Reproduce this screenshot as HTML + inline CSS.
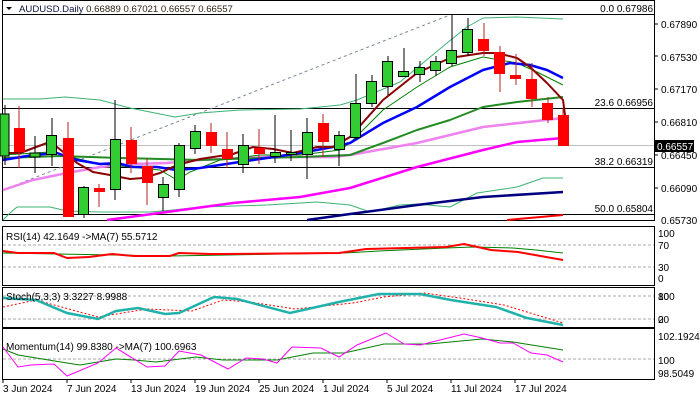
<!DOCTYPE html>
<html><head><meta charset="utf-8"><style>
html,body{margin:0;padding:0;background:#fff;width:700px;height:400px;overflow:hidden}
svg{display:block}
text{font-family:"Liberation Sans",sans-serif;font-size:10px;fill:#000}
</style></head><body>
<svg width="700" height="400" viewBox="0 0 700 400" xmlns="http://www.w3.org/2000/svg">
<rect width="700" height="400" fill="#fff"/>
<g fill="none" stroke="#000" stroke-width="1">
<rect x="2.5" y="0.5" width="652" height="220"/>
<rect x="2.5" y="226.5" width="652" height="59"/>
<rect x="2.5" y="287.5" width="652" height="40"/>
<rect x="2.5" y="328.5" width="652" height="51"/>
</g>
<g stroke="#000" stroke-width="1">
<line x1="3" y1="14.5" x2="654" y2="14.5"/>
<line x1="3" y1="108.5" x2="654" y2="108.5"/>
<line x1="3" y1="167.5" x2="654" y2="167.5"/>
<line x1="3" y1="214.5" x2="654" y2="214.5"/>
</g>
<line x1="3" y1="145.5" x2="654" y2="145.5" stroke="#c0c0c0"/>
<line x1="3" y1="190" x2="450" y2="15" stroke="#778899" stroke-dasharray="3,3"/>
<g fill="none" stroke-linejoin="round">
<polyline stroke="#3cb371" stroke-width="1" points="3,99 40,99 65,97 100,100 130,108 175,117 200,113 240,110 300,109 340,105 357,100 400,82 447,43 467,27 483,18 517,17 563,19"/>
<polyline stroke="#3cb371" stroke-width="1" points="3,220 10,213 17,207 50,207 67,211 100,212 150,212 173,210 200,207 267,205 317,202 350,205 370,212 400,205 417,204 450,207 477,193 517,187 543,178 563,178"/>
<polyline stroke="#ff0000" stroke-width="2" points="507,220 563,215"/>
<polyline stroke="#000080" stroke-width="2.5" points="307,220 350,214 417,205 483,197 563,192"/>
<polyline stroke="#ff00ff" stroke-width="2.5" points="107,220 167,212 233,203 300,197 350,188 417,167 483,150 517,142 563,138"/>
<polyline stroke="#ee82ee" stroke-width="2.5" points="3,190 33,180 67,173 100,167 133,164 167,163 200,160 267,157 333,157 350,155 417,143 483,127 563,118"/>
<polyline stroke="#228b22" stroke-width="2" points="3,158 60,156 120,158 200,160 260,158 300,157 350,155 383,143 417,130 450,120 483,107 517,102 563,97"/>
<polyline stroke="#008000" stroke-width="1" points="3,155 50,152 75,158 100,164 130,167 160,170 177,180 190,172 220,160 260,155 300,155 340,150 350,143 383,110 417,87 450,67 483,57 517,63 537,72 563,85"/>
<polyline stroke="#0000ff" stroke-width="2.5" points="3,160 33,155 57,153 77,160 100,164 117,163 133,167 157,167 177,170 200,168 233,163 267,158 300,153 333,147 350,143 383,123 417,107 450,87 483,70 510,63 530,65 547,70 563,78"/>
<polyline stroke="#8b0000" stroke-width="2" points="3,153 20,153 47,143 57,147 77,163 93,172 110,175 130,179 143,178 160,173 177,165 200,159 233,154 253,147 273,149 293,153 317,147 333,147 350,137 383,100 417,73 450,58 483,53 497,53 517,58 530,67 547,83 563,100 565,115"/>
</g>
<g stroke-width="1">
<line x1="5" y1="105" x2="5" y2="165" stroke="#000"/><rect x="0" y="114" width="9" height="42" fill="#32cd32" stroke="#000"/>
<line x1="19" y1="106" x2="19" y2="168" stroke="#b22222"/><rect x="14" y="128" width="11" height="24" fill="#f00"/>
<line x1="35" y1="136" x2="35" y2="173" stroke="#000"/><rect x="30" y="153" width="10" height="4" fill="#32cd32" stroke="#000"/>
<line x1="52" y1="118" x2="52" y2="166" stroke="#000"/><rect x="46.5" y="135.5" width="10" height="19" fill="#32cd32" stroke="#000"/>
<line x1="68" y1="122" x2="68" y2="217" stroke="#b22222"/><rect x="63" y="138" width="11" height="79" fill="#f00"/>
<line x1="84" y1="186" x2="84" y2="218" stroke="#000"/><rect x="78.5" y="187.5" width="10" height="27" fill="#32cd32" stroke="#000"/>
<line x1="99" y1="184" x2="99" y2="207" stroke="#b22222"/><rect x="94" y="188" width="11" height="4" fill="#f00"/>
<line x1="115" y1="100" x2="115" y2="200" stroke="#000"/><rect x="110.5" y="139.5" width="10" height="50" fill="#32cd32" stroke="#000"/>
<line x1="131" y1="127" x2="131" y2="173" stroke="#b22222"/><rect x="126" y="140" width="11" height="24" fill="#f00"/>
<line x1="147" y1="158" x2="147" y2="205" stroke="#b22222"/><rect x="142" y="166" width="11" height="17" fill="#f00"/>
<line x1="163" y1="177" x2="163" y2="211" stroke="#000"/><rect x="158.5" y="184.5" width="10" height="13" fill="#32cd32" stroke="#000"/>
<line x1="179" y1="143" x2="179" y2="197" stroke="#000"/><rect x="174.5" y="145.5" width="10" height="44" fill="#32cd32" stroke="#000"/>
<line x1="195" y1="125" x2="195" y2="154" stroke="#000"/><rect x="190.5" y="131.5" width="10" height="17" fill="#32cd32" stroke="#000"/>
<line x1="211" y1="123" x2="211" y2="153" stroke="#b22222"/><rect x="206" y="132" width="11" height="14" fill="#f00"/>
<line x1="227" y1="132" x2="227" y2="168" stroke="#b22222"/><rect x="222" y="149" width="11" height="10" fill="#f00"/>
<line x1="243" y1="134" x2="243" y2="173" stroke="#000"/><rect x="238.5" y="145.5" width="10" height="19" fill="#32cd32" stroke="#000"/>
<line x1="259" y1="129" x2="259" y2="164" stroke="#b22222"/><rect x="254" y="148" width="11" height="6" fill="#f00"/>
<line x1="275" y1="115" x2="275" y2="163" stroke="#000"/><rect x="270.5" y="152.5" width="10" height="4" fill="#32cd32" stroke="#000"/>
<line x1="291" y1="130" x2="291" y2="161" stroke="#000"/><rect x="286.5" y="152.5" width="10" height="2" fill="#32cd32" stroke="#000"/>
<line x1="307" y1="118" x2="307" y2="179" stroke="#000"/><rect x="302.5" y="132.5" width="10" height="22" fill="#32cd32" stroke="#000"/>
<line x1="323" y1="114" x2="323" y2="157" stroke="#b22222"/><rect x="318" y="123" width="11" height="19" fill="#f00"/>
<line x1="339" y1="131" x2="339" y2="166" stroke="#000"/><rect x="334.5" y="135.5" width="10" height="14" fill="#32cd32" stroke="#000"/>
<line x1="356" y1="74" x2="356" y2="140" stroke="#000"/><rect x="350.5" y="103.5" width="10" height="34" fill="#32cd32" stroke="#000"/>
<line x1="372" y1="75" x2="372" y2="107" stroke="#000"/><rect x="366.5" y="81.5" width="10" height="22" fill="#32cd32" stroke="#000"/>
<line x1="388" y1="56" x2="388" y2="95" stroke="#000"/><rect x="382.5" y="61.5" width="10" height="25" fill="#32cd32" stroke="#000"/>
<line x1="404" y1="48" x2="404" y2="77" stroke="#000"/><rect x="398.5" y="71.5" width="10" height="5" fill="#32cd32" stroke="#000"/>
<line x1="420" y1="61" x2="420" y2="82" stroke="#000"/><rect x="414.5" y="67.5" width="10" height="7" fill="#32cd32" stroke="#000"/>
<line x1="436" y1="56" x2="436" y2="76" stroke="#000"/><rect x="430.5" y="61.5" width="10" height="9" fill="#32cd32" stroke="#000"/>
<line x1="452" y1="15" x2="452" y2="66" stroke="#000"/><rect x="446.5" y="50.5" width="10" height="13" fill="#32cd32" stroke="#000"/>
<line x1="468" y1="18" x2="468" y2="56" stroke="#000"/><rect x="462.5" y="29.5" width="10" height="23" fill="#32cd32" stroke="#000"/>
<line x1="484" y1="23" x2="484" y2="56" stroke="#b22222"/><rect x="478" y="39" width="11" height="12" fill="#f00"/>
<line x1="500" y1="46" x2="500" y2="92" stroke="#b22222"/><rect x="494" y="52" width="11" height="22" fill="#f00"/>
<line x1="516" y1="54" x2="516" y2="85" stroke="#b22222"/><rect x="510" y="75" width="11" height="4" fill="#f00"/>
<line x1="532" y1="63" x2="532" y2="107" stroke="#b22222"/><rect x="526" y="79" width="11" height="20" fill="#f00"/>
<line x1="548" y1="97" x2="548" y2="123" stroke="#b22222"/><rect x="542" y="103" width="11" height="17" fill="#f00"/>
<line x1="563" y1="108" x2="563" y2="146" stroke="#b22222"/><rect x="558" y="115" width="11" height="31" fill="#f00"/>
</g>
<path d="M6 7 L12 7 L9 10 Z" fill="#000"/>
<text x="19" y="12" style="font-size:9.6px;fill:#101040">AUDUSD.Daily  <tspan style="fill:#302010">0.66889 0.67021 0.66557 0.66557</tspan></text>
<g text-anchor="end">
<text x="653" y="12">0.0 0.67986</text>
<text x="653" y="106">23.6 0.66956</text>
<text x="653" y="165">38.2 0.66319</text>
<text x="653" y="212">50.0 0.65804</text>
</g>
<g stroke="#000"><line x1="655" y1="24" x2="658" y2="24"/><line x1="655" y1="56" x2="658" y2="56"/><line x1="655" y1="89" x2="658" y2="89"/><line x1="655" y1="122" x2="658" y2="122"/><line x1="655" y1="155" x2="658" y2="155"/><line x1="655" y1="188" x2="658" y2="188"/></g>
<text x="661" y="28">0.67890</text>
<text x="661" y="61">0.67530</text>
<text x="661" y="93">0.67170</text>
<text x="661" y="126">0.66810</text>
<text x="661" y="159">0.66450</text>
<text x="661" y="192">0.66090</text>
<text x="661" y="224">0.65730</text>
<rect x="655" y="140" width="39" height="12" fill="#000"/>
<text x="657" y="150" style="fill:#fff">0.66557</text>
<g stroke="#aaa" stroke-dasharray="3,2"><line x1="3" y1="245" x2="654" y2="245"/><line x1="3" y1="267" x2="654" y2="267"/></g>
<polyline fill="none" stroke="#008000" stroke-width="1" points="3,253 58,254 170,256 344,253 379,251 446,248 473,247 513,248 536,250 563,253"/>
<polyline fill="none" stroke="#f00" stroke-width="2" points="3,251 18,253 54,253 67,258 89,257 112,254 134,256 170,256 179,253 210,254 223,254 339,253 366,249 446,247 464,244 491,250 518,252 563,260"/>
<text x="6" y="240">RSI(14) 42.1649  -&gt;MA(7) 55.5712</text>
<text x="658" y="237">100</text><text x="658" y="249">70</text><text x="658" y="271">30</text><text x="658" y="282">0</text>
<g stroke="#aaa" stroke-dasharray="3,2"><line x1="3" y1="296" x2="654" y2="296"/><line x1="3" y1="319" x2="654" y2="319"/></g>
<polyline fill="none" stroke="#f00" stroke-width="1" stroke-dasharray="2,2" points="3,307 36,300 98,317 147,309 192,311 223,300 250,302 295,309 353,303 384,297 424,293 460,298 504,305 563,323"/>
<polyline fill="none" stroke="#20b2aa" stroke-width="2.5" points="3,298 36,300 67,313 98,319 116,311 138,308 165,314 179,313 214,297 237,299 290,313 339,302 379,294 420,294 451,300 496,307 527,318 563,325"/>
<text x="6" y="300">Stoch(5,3,3) 3.3227 8.9988</text>
<text x="658" y="300">100</text><text x="658" y="300">80</text><text x="658" y="323">20</text><text x="658" y="323">0</text>
<line x1="3" y1="359" x2="654" y2="359" stroke="#aaa" stroke-dasharray="3,2"/>
<polyline fill="none" stroke="#008000" stroke-width="1" points="3,349 18,355 67,363 80,365 116,359 134,360 156,362 196,357 223,360 277,360 313,353 344,353 384,344 429,344 482,339 513,342 563,350"/>
<polyline fill="none" stroke="#ff00ff" stroke-width="1" points="3,347 18,367 31,365 54,364 67,376 98,363 116,348 147,367 165,366 179,351 201,355 228,369 246,358 263,359 277,363 292,347 321,348 339,357 357,345 386,333 404,344 420,345 464,334 482,338 500,343 513,343 531,353 547,355 563,362"/>
<text x="6" y="350">Momentum(14) 99.8380  -&gt;MA(7) 100.6963</text>
<text x="658" y="340">102.1924</text><text x="658" y="364">100</text><text x="658" y="377">98.5049</text>
<g stroke="#000"><line x1="3" y1="380" x2="3" y2="383"/><line x1="67" y1="380" x2="67" y2="383"/><line x1="131" y1="380" x2="131" y2="383"/><line x1="195" y1="380" x2="195" y2="383"/><line x1="259" y1="380" x2="259" y2="383"/><line x1="323" y1="380" x2="323" y2="383"/><line x1="387" y1="380" x2="387" y2="383"/><line x1="451" y1="380" x2="451" y2="383"/><line x1="515" y1="380" x2="515" y2="383"/></g>
<text x="3" y="392">3 Jun 2024</text>
<text x="67" y="392">7 Jun 2024</text>
<text x="131" y="392">13 Jun 2024</text>
<text x="195" y="392">19 Jun 2024</text>
<text x="259" y="392">25 Jun 2024</text>
<text x="323" y="392">1 Jul 2024</text>
<text x="387" y="392">5 Jul 2024</text>
<text x="451" y="392">11 Jul 2024</text>
<text x="515" y="392">17 Jul 2024</text>
</svg>
</body></html>
